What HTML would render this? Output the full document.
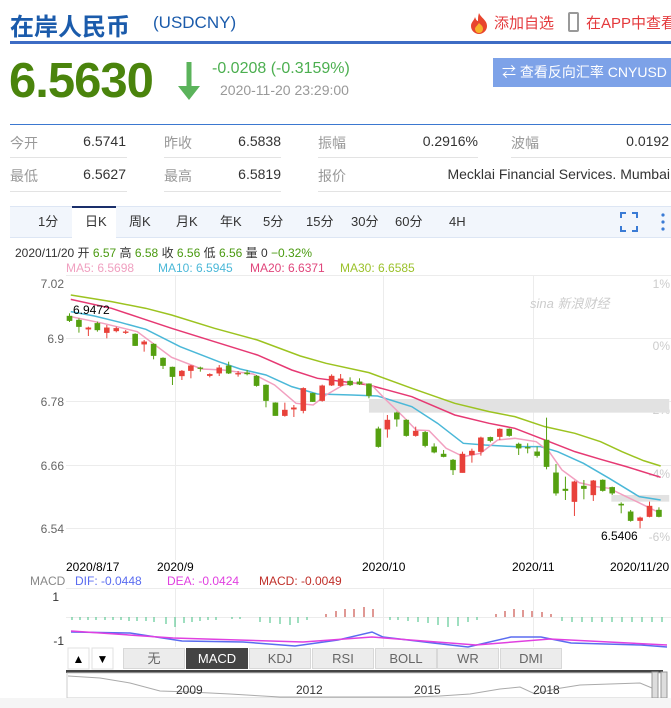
<!DOCTYPE html>
<html><head><meta charset="utf-8"><style>
*{margin:0;padding:0;box-sizing:border-box}
body{width:671px;height:708px;background:#fff;font-family:"Liberation Sans","Noto Sans CJK SC",sans-serif;position:relative;overflow:hidden}
.a{position:absolute;white-space:nowrap}
.lb{color:#999;font-size:14px}
.v{color:#333;font-size:14px;text-align:right}
.ln{position:absolute;height:1px;background:#e3e3e3}
.tab{position:absolute;top:213px;font-size:13px;color:#333;line-height:18px;height:18px}
.btn{position:absolute;top:648px;height:21px;background:#ececec;border:1px solid #d8d8d8;font-size:13px;color:#666;text-align:center;line-height:19px}
</style></head><body>
<div class="a" style="left:10px;top:7px;font-size:24px;font-weight:bold;color:#1b5bab">在岸人民币</div>
<div class="a" style="left:153px;top:13px;font-size:17px;color:#1b5bab">(USDCNY)</div>
<svg class="a" style="left:468px;top:12px" width="22" height="22" viewBox="0 0 22 22"><path d="M11 1C13 6 19 8 19 14a8 8 0 0 1-16 0c0-4 3-5 4-9 1 3 2 4 3 4 0-3 0-5 1-8z" fill="#e8452e"/><path d="M11 11c2 2 4 3 4 6a4 4 0 0 1-8 0c0-2 2-3 4-6z" fill="#f7b12a"/></svg>
<div class="a" style="left:494px;top:12px;font-size:15px;color:#e4393c">添加自选</div>
<div class="a" style="left:568px;top:12px;width:11px;height:20px;border:2px solid #999;border-radius:2px"></div>
<div class="a" style="left:586px;top:12px;font-size:15px;color:#e4393c">在APP中查看</div>
<div class="a" style="left:10px;top:41px;width:661px;height:3px;background:#3d6cc4"></div>
<div class="a" style="left:9px;top:53px;font-size:49px;font-weight:bold;color:#4a840c;letter-spacing:-1px">6.5630</div>
<svg class="a" style="left:176px;top:62px" width="26" height="40"><path d="M13 0v30" stroke="#5bb35b" stroke-width="5"/><path d="M2 24l11 14 11-14z" fill="#5bb35b"/></svg>
<div class="a" style="left:212px;top:60px;font-size:16px;color:#4caf50">-0.0208 (-0.3159%)</div>
<div class="a" style="left:220px;top:82px;font-size:14px;color:#999">2020-11-20 23:29:00</div>
<div class="a" style="left:493px;top:58px;width:178px;height:29px;background:#7da2e8;color:#fff;font-size:14px;line-height:29px;padding-left:9px;overflow:hidden">⇄ 查看反向汇率 CNYUSD</div>
<div class="a" style="left:10px;top:124px;width:661px;height:1px;background:#3b78d0"></div>
<div class="a lb" style="left:10px;top:133px">今开</div><div class="a v" style="left:60px;width:66px;top:133px">6.5741</div>
<div class="a lb" style="left:164px;top:133px">昨收</div><div class="a v" style="left:200px;width:81px;top:133px">6.5838</div>
<div class="a lb" style="left:318px;top:133px">振幅</div><div class="a v" style="left:380px;width:98px;top:133px">0.2916%</div>
<div class="a lb" style="left:511px;top:133px">波幅</div><div class="a v" style="left:580px;width:89px;top:133px">0.0192</div>
<div class="ln" style="left:10px;width:117px;top:157px"></div><div class="ln" style="left:164px;width:117px;top:157px"></div><div class="ln" style="left:318px;width:160px;top:157px"></div><div class="ln" style="left:511px;width:160px;top:157px"></div>
<div class="a lb" style="left:10px;top:166px">最低</div><div class="a v" style="left:60px;width:66px;top:166px">6.5627</div>
<div class="a lb" style="left:164px;top:166px">最高</div><div class="a v" style="left:200px;width:81px;top:166px">6.5819</div>
<div class="a lb" style="left:318px;top:166px">报价</div><div class="a v" style="left:420px;width:250px;top:166px">Mecklai Financial Services. Mumbai</div>
<div class="ln" style="left:10px;width:117px;top:191px"></div><div class="ln" style="left:164px;width:117px;top:191px"></div><div class="ln" style="left:318px;width:353px;top:191px"></div>
<div class="a" style="left:10px;top:206px;width:661px;height:32px;background:#f2f6fc;border-top:1px solid #dde6f4;border-bottom:1px solid #dde6f4"></div>
<div class="a" style="left:72px;top:206px;width:44px;height:32px;background:#fff;border-top:2px solid #1a2f6b"></div>
<div class="tab" style="left:38px">1分</div><div class="tab" style="left:85px">日K</div><div class="tab" style="left:129px">周K</div><div class="tab" style="left:176px">月K</div><div class="tab" style="left:220px">年K</div><div class="tab" style="left:263px">5分</div><div class="tab" style="left:306px">15分</div><div class="tab" style="left:351px">30分</div><div class="tab" style="left:395px">60分</div><div class="tab" style="left:449px">4H</div>
<svg class="a" style="left:620px;top:212px" width="50" height="20"><path d="M1 6V1h5M12 1h5v5M17 14v5h-5M6 19H1v-5" fill="none" stroke="#3a7bd5" stroke-width="2"/><circle cx="43" cy="3" r="1.6" fill="#3a7bd5"/><circle cx="43" cy="10" r="1.6" fill="#3a7bd5"/><circle cx="43" cy="17" r="1.6" fill="#3a7bd5"/></svg>
<div class="a" style="left:15px;top:244px;font-size:12px;color:#333">2020/11/20 开 <span style="color:#4a9a10">6.57</span> 高 <span style="color:#4a9a10">6.58</span> 收 <span style="color:#4a9a10">6.56</span> 低 <span style="color:#4a9a10">6.56</span> 量 0 <span style="color:#4a9a10">−0.32%</span></div>
<div class="a" style="left:66px;top:261px;font-size:12px;color:#f0a0c0">MA5: 6.5698</div>
<div class="a" style="left:158px;top:261px;font-size:12px;color:#4bb8d8">MA10: 6.5945</div>
<div class="a" style="left:250px;top:261px;font-size:12px;color:#e0457b">MA20: 6.6371</div>
<div class="a" style="left:340px;top:261px;font-size:12px;color:#9bc12a">MA30: 6.6585</div>
<svg class="a" style="left:0;top:0" width="671" height="708">
<g stroke="#ececec" stroke-width="1">
<line x1="66" y1="275.5" x2="671" y2="275.5"/><line x1="66" y1="338.5" x2="671" y2="338.5"/><line x1="66" y1="401.5" x2="671" y2="401.5"/><line x1="66" y1="465.5" x2="671" y2="465.5"/><line x1="66" y1="528.5" x2="671" y2="528.5"/>
<line x1="175.5" y1="275" x2="175.5" y2="560"/><line x1="383.5" y1="275" x2="383.5" y2="560"/><line x1="533.5" y1="275" x2="533.5" y2="560"/>
<line x1="175.5" y1="588" x2="175.5" y2="647"/><line x1="383.5" y1="588" x2="383.5" y2="647"/><line x1="533.5" y1="588" x2="533.5" y2="647"/>
<line x1="66" y1="588.5" x2="671" y2="588.5"/><line x1="66" y1="617.5" x2="671" y2="617.5"/>
</g>
<g font-size="12" fill="#666" font-family="Liberation Sans,sans-serif" text-anchor="end">
<text x="64" y="288">7.02</text><text x="64" y="343">6.9</text><text x="64" y="406">6.78</text><text x="64" y="470">6.66</text><text x="64" y="533">6.54</text>
</g>
<g font-size="12" fill="#ccc" font-family="Liberation Sans,sans-serif" text-anchor="end">
<text x="670" y="288">1%</text><text x="670" y="350">0%</text><text x="670" y="414">-2%</text><text x="670" y="478">-4%</text><text x="670" y="541">-6%</text>
</g>
<text x="530" y="308" font-size="13" fill="#ccc" font-style="italic" font-family="Liberation Sans,Noto Sans CJK SC,sans-serif">sina 新浪财经</text>
<g transform="translate(0,270) scale(0.429,0.3333)">
<rect x="860" y="387" width="700" height="41" fill="#e2e2e2"/>
<rect x="1425" y="675" width="135" height="20" fill="#e2e2e2"/>
<g fill="none" stroke-width="1.5" vector-effect="non-scaling-stroke">
<polyline vector-effect="non-scaling-stroke" stroke="#9cc320" points="165,75 260,95 340,115 400,135 500,175 600,210 700,258 760,280 860,308 960,355 1060,400 1140,425 1200,440 1270,470 1340,490 1400,515 1450,545 1500,572 1540,588"/>
<polyline vector-effect="non-scaling-stroke" stroke="#e63973" points="165,88 260,115 330,145 400,175 500,215 600,255 680,300 740,325 860,345 960,380 1060,435 1140,460 1200,475 1270,510 1340,545 1400,568 1460,590 1540,622"/>
<polyline vector-effect="non-scaling-stroke" stroke="#4bb8d8" points="165,125 220,138 280,157 340,178 420,230 510,275 560,297 620,315 680,350 740,372 820,375 880,378 960,410 1020,460 1080,520 1130,525 1200,530 1260,530 1300,545 1360,580 1420,625 1490,680 1540,690"/>
<polyline vector-effect="non-scaling-stroke" stroke="#f2a0c0" points="165,140 240,160 320,185 400,262 470,297 520,300 590,312 640,345 690,400 730,405 760,375 800,345 840,337 870,350 900,390 940,440 970,480 1000,482 1040,535 1080,560 1120,550 1160,510 1200,505 1250,515 1280,545 1310,600 1350,638 1390,650 1420,655 1460,680 1500,705 1540,730"/>
</g>
<g stroke-width="1">
<g fill="#55a010" stroke="#55a010">
<line vector-effect="non-scaling-stroke" x1="162" y1="130" x2="162" y2="156"/><rect x="156" y="138" width="12" height="14"/>
<line vector-effect="non-scaling-stroke" x1="184" y1="145" x2="184" y2="188"/><rect x="178" y="150" width="12" height="20"/>
<line vector-effect="non-scaling-stroke" x1="227" y1="155" x2="227" y2="185"/><rect x="221" y="160" width="12" height="20"/>
<line vector-effect="non-scaling-stroke" x1="315" y1="190" x2="315" y2="228"/><rect x="309" y="192" width="12" height="35"/>
<line vector-effect="non-scaling-stroke" x1="358" y1="220" x2="358" y2="268"/><rect x="352" y="222" width="12" height="35"/>
<line vector-effect="non-scaling-stroke" x1="380" y1="262" x2="380" y2="297"/><rect x="374" y="264" width="12" height="23"/>
<line vector-effect="non-scaling-stroke" x1="402" y1="290" x2="402" y2="345"/><rect x="396" y="291" width="12" height="29"/>
<line vector-effect="non-scaling-stroke" x1="467" y1="290" x2="467" y2="305"/><rect x="461" y="293" width="12" height="3"/>
<line vector-effect="non-scaling-stroke" x1="533" y1="275" x2="533" y2="312"/><rect x="527" y="287" width="12" height="23"/>
<line vector-effect="non-scaling-stroke" x1="576" y1="300" x2="576" y2="316"/><rect x="570" y="308" width="12" height="4"/>
<line vector-effect="non-scaling-stroke" x1="598" y1="315" x2="598" y2="350"/><rect x="592" y="318" width="12" height="29"/>
<line vector-effect="non-scaling-stroke" x1="620" y1="343" x2="620" y2="412"/><rect x="614" y="345" width="12" height="47"/>
<line vector-effect="non-scaling-stroke" x1="642" y1="397" x2="642" y2="437"/><rect x="636" y="398" width="12" height="39"/>
<line vector-effect="non-scaling-stroke" x1="729" y1="368" x2="729" y2="396"/><rect x="723" y="370" width="12" height="25"/>
<line vector-effect="non-scaling-stroke" x1="816" y1="322" x2="816" y2="348"/><rect x="810" y="333" width="12" height="12"/>
<line vector-effect="non-scaling-stroke" x1="838" y1="325" x2="838" y2="345"/><rect x="832" y="335" width="12" height="8"/>
<line vector-effect="non-scaling-stroke" x1="860" y1="340" x2="860" y2="385"/><rect x="854" y="341" width="12" height="36"/>
<line vector-effect="non-scaling-stroke" x1="882" y1="470" x2="882" y2="533"/><rect x="876" y="476" width="12" height="54"/>
<line vector-effect="non-scaling-stroke" x1="925" y1="425" x2="925" y2="470"/><rect x="919" y="428" width="12" height="20"/>
<line vector-effect="non-scaling-stroke" x1="947" y1="448" x2="947" y2="500"/><rect x="941" y="450" width="12" height="47"/>
<line vector-effect="non-scaling-stroke" x1="991" y1="483" x2="991" y2="532"/><rect x="985" y="487" width="12" height="40"/>
<line vector-effect="non-scaling-stroke" x1="1012" y1="520" x2="1012" y2="550"/><rect x="1006" y="530" width="12" height="17"/>
<line vector-effect="non-scaling-stroke" x1="1034" y1="540" x2="1034" y2="562"/><rect x="1028" y="552" width="12" height="8"/>
<line vector-effect="non-scaling-stroke" x1="1056" y1="567" x2="1056" y2="615"/><rect x="1050" y="570" width="12" height="30"/>
<line vector-effect="non-scaling-stroke" x1="1143" y1="500" x2="1143" y2="517"/><rect x="1137" y="502" width="12" height="10"/>
<line vector-effect="non-scaling-stroke" x1="1187" y1="475" x2="1187" y2="500"/><rect x="1181" y="477" width="12" height="20"/>
<line vector-effect="non-scaling-stroke" x1="1209" y1="518" x2="1209" y2="555"/><rect x="1203" y="522" width="12" height="13"/>
<line vector-effect="non-scaling-stroke" x1="1230" y1="520" x2="1230" y2="550"/><rect x="1224" y="532" width="12" height="3"/>
<line vector-effect="non-scaling-stroke" x1="1252" y1="530" x2="1252" y2="563"/><rect x="1246" y="545" width="12" height="12"/>
<line vector-effect="non-scaling-stroke" x1="1274" y1="443" x2="1274" y2="598"/><rect x="1268" y="510" width="12" height="80"/>
<line vector-effect="non-scaling-stroke" x1="1296" y1="582" x2="1296" y2="677"/><rect x="1290" y="608" width="12" height="62"/>
<line vector-effect="non-scaling-stroke" x1="1318" y1="620" x2="1318" y2="690"/><rect x="1312" y="657" width="12" height="5"/>
<line vector-effect="non-scaling-stroke" x1="1361" y1="630" x2="1361" y2="688"/><rect x="1355" y="648" width="12" height="8"/>
<line vector-effect="non-scaling-stroke" x1="1405" y1="628" x2="1405" y2="665"/><rect x="1399" y="630" width="12" height="32"/>
<line vector-effect="non-scaling-stroke" x1="1427" y1="650" x2="1427" y2="675"/><rect x="1421" y="652" width="12" height="18"/>
<line vector-effect="non-scaling-stroke" x1="1448" y1="697" x2="1448" y2="730"/><rect x="1442" y="702" width="12" height="4"/>
<line vector-effect="non-scaling-stroke" x1="1470" y1="720" x2="1470" y2="755"/><rect x="1464" y="725" width="12" height="27"/>
<line vector-effect="non-scaling-stroke" x1="1536" y1="712" x2="1536" y2="742"/><rect x="1530" y="720" width="12" height="20"/>
</g>
<g fill="#e8413a" stroke="#e8413a">
<line vector-effect="non-scaling-stroke" x1="206" y1="170" x2="206" y2="198"/><rect x="200" y="173" width="12" height="5"/>
<line vector-effect="non-scaling-stroke" x1="249" y1="165" x2="249" y2="205"/><rect x="243" y="173" width="12" height="15"/>
<line vector-effect="non-scaling-stroke" x1="271" y1="170" x2="271" y2="187"/><rect x="265" y="175" width="12" height="8"/>
<line vector-effect="non-scaling-stroke" x1="293" y1="180" x2="293" y2="192"/><rect x="287" y="185" width="12" height="3"/>
<line vector-effect="non-scaling-stroke" x1="336" y1="210" x2="336" y2="245"/><rect x="330" y="215" width="12" height="8"/>
<line vector-effect="non-scaling-stroke" x1="424" y1="300" x2="424" y2="330"/><rect x="418" y="303" width="12" height="15"/>
<line vector-effect="non-scaling-stroke" x1="445" y1="285" x2="445" y2="325"/><rect x="439" y="287" width="12" height="15"/>
<line vector-effect="non-scaling-stroke" x1="489" y1="310" x2="489" y2="322"/><rect x="483" y="313" width="12" height="4"/>
<line vector-effect="non-scaling-stroke" x1="511" y1="285" x2="511" y2="318"/><rect x="505" y="293" width="12" height="17"/>
<line vector-effect="non-scaling-stroke" x1="555" y1="303" x2="555" y2="320"/><rect x="549" y="310" width="12" height="3"/>
<line vector-effect="non-scaling-stroke" x1="664" y1="398" x2="664" y2="440"/><rect x="658" y="420" width="12" height="17"/>
<line vector-effect="non-scaling-stroke" x1="685" y1="405" x2="685" y2="441"/><rect x="679" y="413" width="12" height="5"/>
<line vector-effect="non-scaling-stroke" x1="707" y1="352" x2="707" y2="430"/><rect x="701" y="355" width="12" height="67"/>
<line vector-effect="non-scaling-stroke" x1="751" y1="344" x2="751" y2="395"/><rect x="745" y="347" width="12" height="45"/>
<line vector-effect="non-scaling-stroke" x1="773" y1="313" x2="773" y2="348"/><rect x="767" y="318" width="12" height="28"/>
<line vector-effect="non-scaling-stroke" x1="794" y1="312" x2="794" y2="350"/><rect x="788" y="326" width="12" height="21"/>
<line vector-effect="non-scaling-stroke" x1="903" y1="435" x2="903" y2="503"/><rect x="897" y="450" width="12" height="28"/>
<line vector-effect="non-scaling-stroke" x1="969" y1="470" x2="969" y2="500"/><rect x="963" y="483" width="12" height="14"/>
<line vector-effect="non-scaling-stroke" x1="1078" y1="545" x2="1078" y2="608"/><rect x="1072" y="552" width="12" height="56"/>
<line vector-effect="non-scaling-stroke" x1="1100" y1="536" x2="1100" y2="578"/><rect x="1094" y="543" width="12" height="12"/>
<line vector-effect="non-scaling-stroke" x1="1121" y1="500" x2="1121" y2="557"/><rect x="1115" y="503" width="12" height="42"/>
<line vector-effect="non-scaling-stroke" x1="1165" y1="475" x2="1165" y2="510"/><rect x="1159" y="477" width="12" height="23"/>
<line vector-effect="non-scaling-stroke" x1="1339" y1="632" x2="1339" y2="738"/><rect x="1333" y="635" width="12" height="60"/>
<line vector-effect="non-scaling-stroke" x1="1383" y1="630" x2="1383" y2="693"/><rect x="1377" y="632" width="12" height="43"/>
<line vector-effect="non-scaling-stroke" x1="1492" y1="740" x2="1492" y2="775"/><rect x="1486" y="743" width="12" height="9"/>
<line vector-effect="non-scaling-stroke" x1="1514" y1="695" x2="1514" y2="742"/><rect x="1508" y="708" width="12" height="32"/>
</g>
</g>
</g>
<text x="73" y="314" font-size="12" fill="#000" font-family="Liberation Sans,sans-serif">6.9472</text>
<text x="601" y="540" font-size="12" fill="#000" font-family="Liberation Sans,sans-serif">6.5406</text>
<g font-size="12" fill="#000" font-family="Liberation Sans,sans-serif">
<text x="66" y="571">2020/8/17</text><text x="157" y="571">2020/9</text><text x="362" y="571">2020/10</text><text x="512" y="571">2020/11</text><text x="610" y="571">2020/11/20</text>
</g>
<g font-size="12" font-family="Liberation Sans,sans-serif">
<text x="30" y="585" fill="#888">MACD</text><text x="75" y="585" fill="#5a6cf0">DIF: -0.0448</text><text x="167" y="585" fill="#e040e0">DEA: -0.0424</text><text x="259" y="585" fill="#c0302a">MACD: -0.0049</text>
<text x="59" y="601" fill="#333" text-anchor="end">1</text><text x="64" y="645" fill="#333" text-anchor="end">-1</text>
</g>
<g stroke="#3fbf80" stroke-width="1">
<path d="M72 617v3M80 617v3M88 617v3M96 617v3M105 617v3M113 617v3M121 617v3M129 617v4M137 617v4M146 617v4M154 617v5M166 617v7M175 617v10M184 617v6M192 617v5M200 617v4M208 617v3M216 617v3M232 617v2M240 617v2M260 617v5M270 617v6M280 617v7M290 617v8M298 617v6M307 617v3M390 617v3M398 617v3M408 617v4M418 617v5M428 617v6M438 617v8M448 617v10M458 617v9M468 617v5M477 617v3M562 617v4M572 617v5M582 617v5M592 617v5M602 617v5M612 617v5M622 617v5M632 617v5M642 617v5M652 617v5M662 617v5"/>
</g>
<g stroke="#c0302a" stroke-width="1">
<path d="M326 617v-3M336 617v-6M345 617v-8M354 617v-8M364 617v-10M373 617v-8M496 617v-3M505 617v-6M514 617v-8M523 617v-7M532 617v-6M542 617v-5M551 617v-3"/>
</g>
<polyline fill="none" stroke="#5a6cf0" stroke-width="1.5" points="71,632 130,633 182,641 243,642 295,646 338,640 372,632 383,637 433,643 468,647 511,637 541,637 571,643 641,645 667,647"/>
<polyline fill="none" stroke="#e040e0" stroke-width="1.5" points="71,631 173,638 303,642 372,637 476,645 550,639 667,645"/>
<rect x="68" y="648" width="21" height="21" fill="#fff" stroke="#e0e0e0"/><rect x="92" y="648" width="21" height="21" fill="#fff" stroke="#e0e0e0"/>
<text x="78.5" y="663" font-size="12" text-anchor="middle">▲</text><text x="102.5" y="663" font-size="12" text-anchor="middle">▼</text>
<rect x="66" y="670" width="597" height="3" fill="#444"/>
<rect x="67" y="673" width="596" height="25" fill="#fff" stroke="#ccc"/>
<polyline fill="none" stroke="#aaa" stroke-width="1" points="68,676 100,678 130,683 160,691 190,692 230,694 280,697 330,697 380,697 410,697 440,696 470,694 500,689 520,687 535,694 555,689 580,685 610,684 640,683 652,688"/>
<g font-size="12" fill="#333" font-family="Liberation Sans,sans-serif"><text x="176" y="694">2009</text><text x="296" y="694">2012</text><text x="414" y="694">2015</text><text x="533" y="694">2018</text></g>
<rect x="652" y="672" width="6" height="26" fill="#ddd" stroke="#999"/><rect x="661" y="672" width="6" height="26" fill="#ddd" stroke="#999"/>
<rect x="0" y="698" width="671" height="10" fill="#f5f5f5"/>
</svg>
<div class="btn" style="left:123px;width:62px">无</div>
<div class="btn" style="left:186px;width:62px;background:#444;color:#fff;border-color:#444">MACD</div>
<div class="btn" style="left:249px;width:62px">KDJ</div>
<div class="btn" style="left:312px;width:62px">RSI</div>
<div class="btn" style="left:375px;width:62px">BOLL</div>
<div class="btn" style="left:437px;width:62px">WR</div>
<div class="btn" style="left:500px;width:62px">DMI</div>
</body></html>
